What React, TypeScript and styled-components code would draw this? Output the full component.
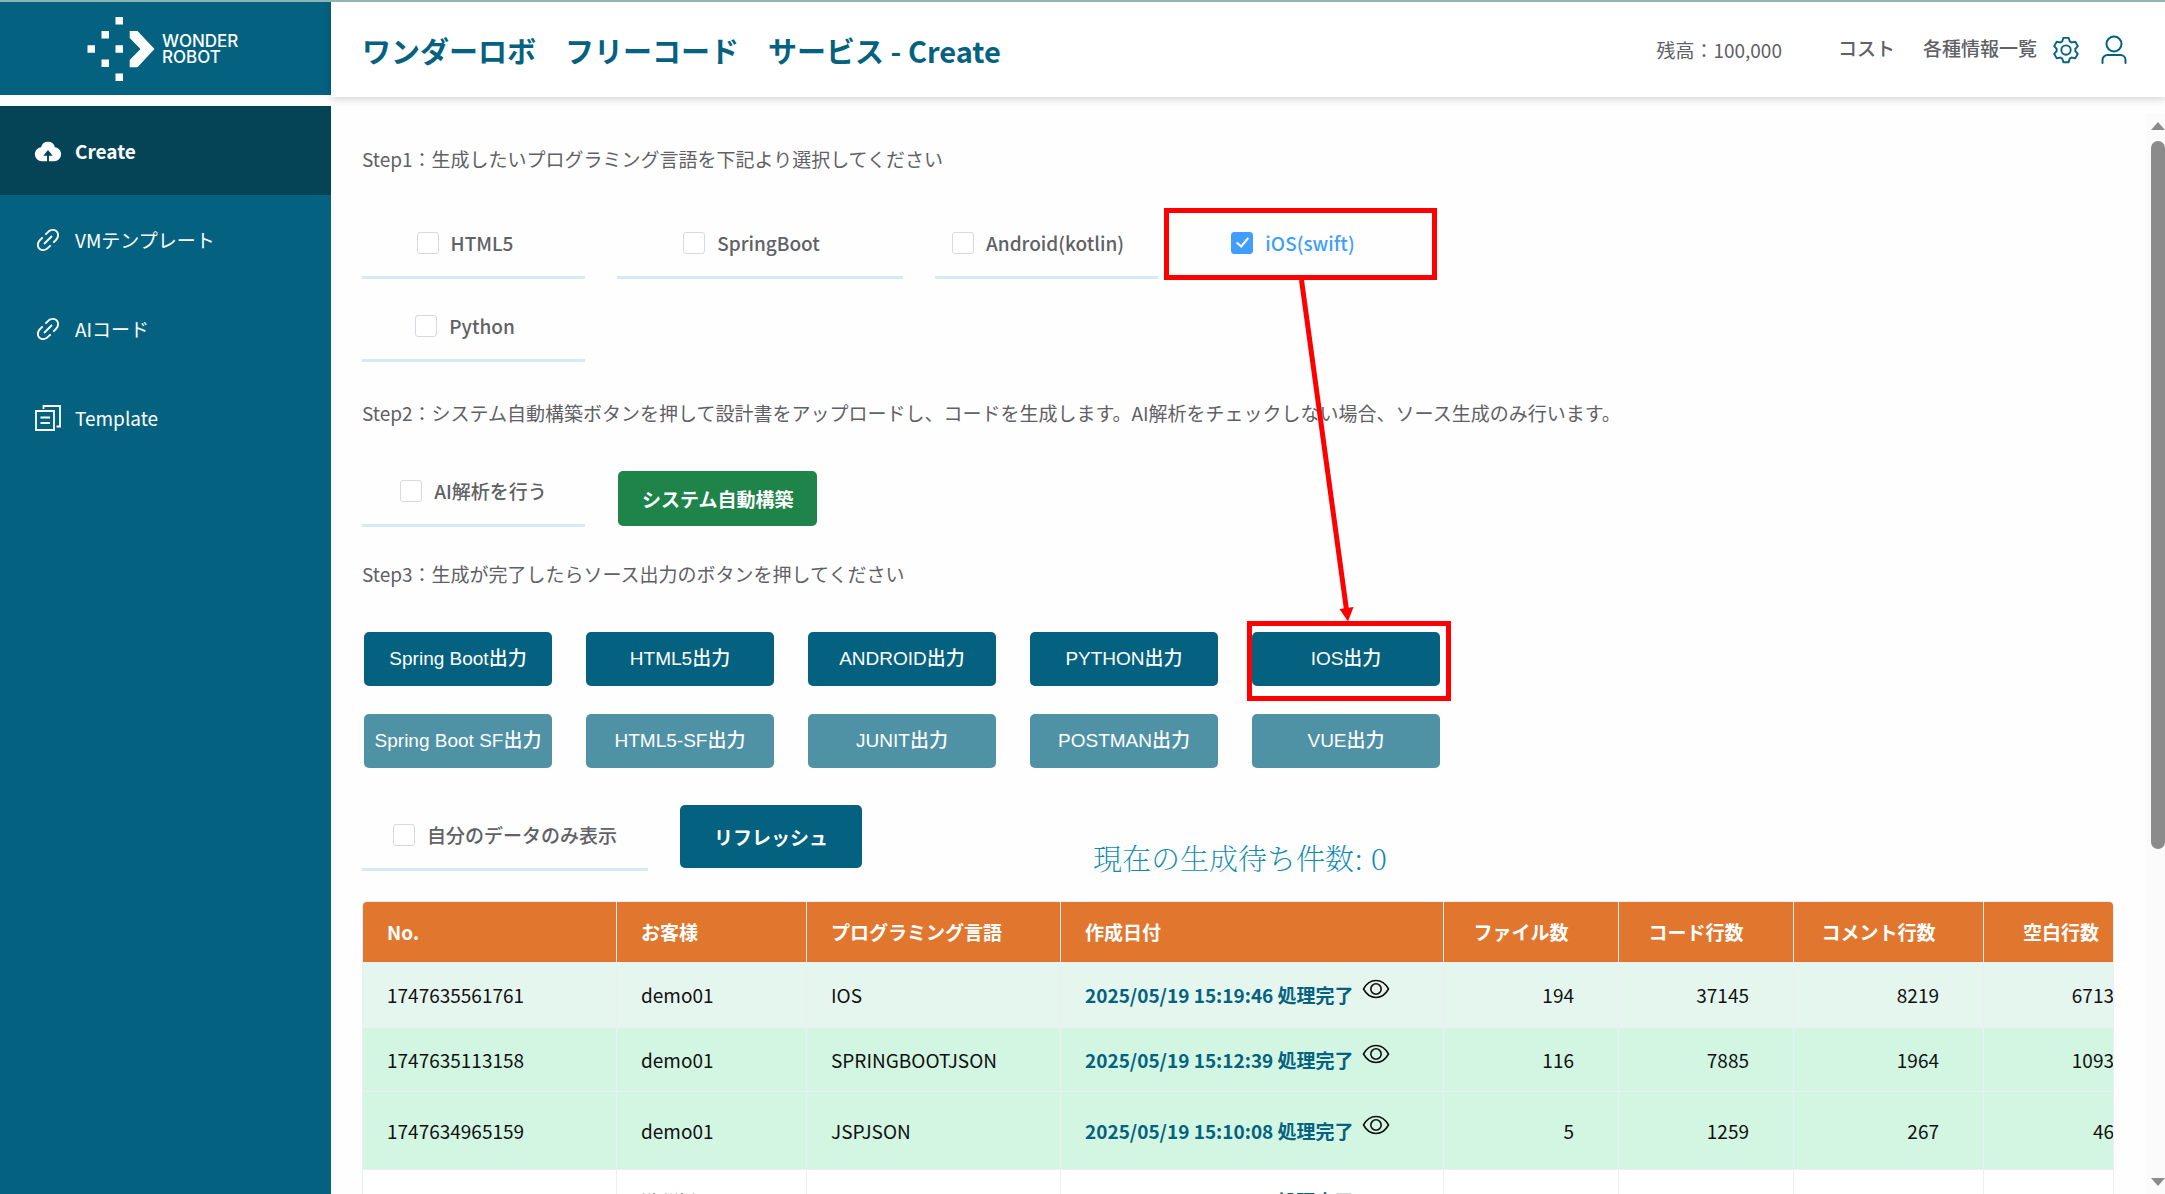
import React from "react";
import styled, { createGlobalStyle, css } from "styled-components";

const Global = createGlobalStyle`
  *, *::before, *::after { box-sizing: border-box; }
  body { margin: 0; background: #fefefe; color: #5f6165; font: 400 19px/28px "Noto Sans CJK JP", sans-serif; overflow: hidden; }
  button, input { font: inherit; }
`;

const Shell = styled.div`
  display: grid;
  grid-template-columns: 331px minmax(0, 1fr);
  grid-template-rows: 97px minmax(0, 1fr);
  height: 100vh;
  border-top: 2px solid #8fb4b6;
  overflow: hidden;
`;

const Brand = styled.div`
  display: flex;
  align-items: center;
  gap: 6px;
  height: 93px;
  padding-left: 86px;
  background: #046280;
`;

const BrandName = styled.div`
  color: #fff;
  font: 500 17px/16px Inter, "Liberation Sans", sans-serif;
`;

const Header = styled.header`
  z-index: 1;
  display: flex;
  align-items: center;
  height: 95px;
  padding: 0 36px 0 31px;
  background: #fff;
  box-shadow: 0 2px 8px rgba(0, 0, 0, 0.18);
`;

const Title = styled.h1`
  flex: 1;
  margin: 0;
  color: #046280;
  font-size: 29px;
  line-height: 40px;
  font-weight: 700;
  white-space: pre;
`;

const HeaderLinks = styled.nav`
  display: flex;
  align-items: center;
`;

const Balance = styled.span`
  margin-right: 56px;
`;

const HeaderLink = styled.a`
  margin-right: 28px;
  padding-bottom: 4px;
  color: inherit;
  font-weight: 500;
  text-decoration: none;
  & + & { margin-right: 14px; }
`;

const IconButton = styled.button`
  display: flex;
  padding: 0;
  border: 0;
  background: none;
  color: #046280;
  cursor: pointer;
  & + & { margin-left: 18px; }
`;

const Sidebar = styled.nav`
  margin-top: 7px;
  background: #046280;
`;

const SideItem = styled.a<{ $active?: boolean }>`
  display: flex;
  align-items: center;
  gap: 12px;
  height: 89px;
  padding-left: 33px;
  color: #fff;
  background: ${(p) => (p.$active ? "#044456" : "transparent")};
  font-weight: ${(p) => (p.$active ? 700 : 400)};
  text-decoration: none;
`;

const Content = styled.div`
  display: flex;
  min-width: 0;
  padding-top: 14px;
`;

const Main = styled.main`
  flex: 1;
  min-width: 0;
  padding: 32px 32px 0 31px;
`;

const Step = styled.p`
  margin: 0;
`;

const Options = styled.div`
  display: flex;
  flex-wrap: wrap;
  gap: 26px 32px;
  max-width: 1200px;
  margin: 49px 0 37px;
`;

const ActionRow = styled.div`
  display: flex;
  align-items: center;
  gap: 32px;
  margin: 43px 0 33px;
`;

const OptionCell = styled.div<{ $wide?: boolean; $trail?: boolean }>`
  position: relative;
  display: flex;
  justify-content: center;
  width: ${(p) => (p.$wide ? 286 : 223)}px;
  height: 57px;
  padding: 7px ${(p) => (p.$trail ? 17 : 0)}px 0 0;
  border-bottom: 3px solid #d6e9f8;
`;

const CheckLabel = styled.label`
  display: flex;
  align-items: center;
  gap: 12px;
  height: 28px;
  font-weight: 500;
  white-space: nowrap;
  cursor: pointer;
  &:has(:checked) { color: #409eff; }
`;

const CheckBox = styled.input`
  appearance: none;
  width: 22px;
  height: 22px;
  margin: 0;
  border: 1px solid #d6d9e1;
  border-radius: 3px;
  background: #fff;
  &:checked {
    border-color: #409eff;
    background: #409eff;
  }
  &:checked::after {
    content: "";
    display: block;
    width: 7px;
    height: 12px;
    margin: 2px 0 0 7px;
    border: solid #fff;
    border-width: 0 2px 2px 0;
    transform: rotate(40deg);
  }
`;

const HighlightFrame = styled.span<{ $inset: string }>`
  position: absolute;
  inset: ${(p) => p.$inset};
  border: 5px solid #fe0000;
  pointer-events: none;
`;

const Arrow = styled.svg`
  position: absolute;
  z-index: 1;
  top: 58px;
  left: 104px;
  pointer-events: none;
`;

const buttonBase = css`
  border: 0;
  border-radius: 5px;
  color: #fff;
  white-space: nowrap;
  cursor: pointer;
`;

const BuildButton = styled.button`
  ${buttonBase}
  height: 55px;
  margin-left: 1px;
  padding: 0 24px;
  background: #1f844a;
  font-weight: 700;
`;

const RefreshButton = styled.button`
  ${buttonBase}
  height: 63px;
  margin-bottom: 3px;
  padding: 0 34px;
  background: #046280;
  font-weight: 700;
`;

const OutputGrid = styled.div`
  display: grid;
  grid-template-columns: repeat(5, 188px);
  gap: 28px 34px;
  margin: 44px 0 37px;
  padding-left: 2px;
`;

const OutputCell = styled.div`
  position: relative;
  display: grid;
`;

const OutputButton = styled.button<{ $muted?: boolean }>`
  ${buttonBase}
  height: 54px;
  padding: 0;
  background: ${(p) => (p.$muted ? "#4f92a6" : "#046280")};
  font-family: "Liberation Sans", "Noto Sans CJK JP", sans-serif;
  font-weight: 500;
`;

const FilterRow = styled.div`
  display: flex;
  align-items: flex-end;
  gap: 32px;
  margin-bottom: 30px;
`;

const Waiting = styled.p`
  margin: 0 0 -7px 199px;
  color: #0e8bb2;
  font: 200 29px/40px "Noto Serif CJK JP", "Noto Sans CJK JP", serif;
`;

const TableFrame = styled.div`
  overflow: hidden;
  border: 1px solid #ebeef5;
  border-radius: 5px 5px 0 0;
`;

const Table = styled.table`
  width: 1796px;
  border-collapse: separate;
  border-spacing: 0;
  table-layout: fixed;
  color: #111;
`;

const cellBase = css`
  padding: 0 24px;
  border: solid #ebeef5;
  border-width: 0 1px 1px 0;
  white-space: nowrap;
`;

const Th = styled.th<{ $num?: boolean }>`
  ${cellBase}
  height: 61px;
  padding-right: ${(p) => (p.$num ? 44 : 24)}px;
  background: #e1772e;
  color: #fff;
  font-weight: 700;
  text-align: ${(p) => (p.$num ? "center" : "left")};
`;

const Td = styled.td<{ $num?: boolean }>`
  ${cellBase}
  padding-right: ${(p) => (p.$num ? 44 : 24)}px;
  text-align: ${(p) => (p.$num ? "right" : "left")};
`;

const Tr = styled.tr<{ $tone: Tone; $h: number }>`
  height: ${(p) => p.$h}px;
  background: ${(p) => tones[p.$tone]};
`;

const DateCell = styled.span`
  display: flex;
  align-items: center;
  gap: 8px;
`;

const DateLink = styled.a`
  color: #046280;
  font-weight: 700;
  text-decoration: none;
`;

const EyeButton = styled(IconButton)`
  margin-bottom: 12px;
  color: #111;
`;

const ScrollTrack = styled.div`
  display: flex;
  flex-direction: column;
  align-items: center;
  width: 19px;
  padding: 9px 0 8px 5px;
  background: #fbfbfb;
`;

const ScrollArrow = styled.span<{ $down?: boolean }>`
  border: solid transparent;
  border-width: ${(p) => (p.$down ? "8px 7px 0" : "0 7px 8px")};
  border-${(p) => (p.$down ? "top" : "bottom")}-color: #8b8b8b;
  ${(p) => p.$down && "margin-top: auto;"}
`;

const ScrollThumb = styled.span`
  width: 14px;
  height: 66.5%;
  margin-top: 11px;
  border-radius: 7px;
  background: #8b8b8b;
`;

type Tone = "hover" | "done" | "plain";
const tones: Record<Tone, string> = { hover: "#e5f6ee", done: "#d3f6e3", plain: "#fff" };

const languages = [
  { label: "HTML5" },
  { label: "SpringBoot", wide: true },
  { label: "Android(kotlin)" },
  { label: "iOS(swift)", checked: true },
  { label: "Python" },
];

const outputs = [
  "Spring Boot出力", "HTML5出力", "ANDROID出力", "PYTHON出力", "IOS出力",
  "Spring Boot SF出力", "HTML5-SF出力", "JUNIT出力", "POSTMAN出力", "VUE出力",
];

const columns = [
  { title: "No.", width: 254 },
  { title: "お客様", width: 190 },
  { title: "プログラミング言語", width: 254 },
  { title: "作成日付", width: 383 },
  { title: "ファイル数", width: 175, num: true },
  { title: "コード行数", width: 175, num: true },
  { title: "コメント行数", width: 190, num: true },
  { title: "空白行数", width: 175, num: true },
];

const rows: { tone: Tone; h: number; viewable: boolean; cells: string[] }[] = [
  { tone: "hover", h: 65, viewable: true, cells: ["1747635561761", "demo01", "IOS", "2025/05/19 15:19:46 処理完了", "194", "37145", "8219", "6713"] },
  { tone: "done", h: 64, viewable: true, cells: ["1747635113158", "demo01", "SPRINGBOOTJSON", "2025/05/19 15:12:39 処理完了", "116", "7885", "1964", "1093"] },
  { tone: "done", h: 78, viewable: true, cells: ["1747634965159", "demo01", "JSPJSON", "2025/05/19 15:10:08 処理完了", "5", "1259", "267", "46"] },
  { tone: "plain", h: 63, viewable: false, cells: ["1747628380025", "lihlilhl", "JSPJSON", "2025/05/19 13:20:25 処理完了", "4", "11234", "1382", "104"] },
];

const Logo = () => (
  <svg width="70" height="64" viewBox="0 0 70 64" fill="#fff" aria-hidden="true">
    <path d="M29.500 0h7.500v7.500h-7.500zM15.500 14h7.500v7.500h-7.500zM1.500 28.300h7.500v7.500h-7.500zM29.500 28.300h7.500v7.500h-7.500zM15.500 42.500h7.500v7.500h-7.500zM29.500 56.500h7.500v7.500h-7.500zM43.700 14H51.500L68.500 32 51.500 50.200H43.700V43L54.500 32 43.700 21z" />
  </svg>
);

const CloudIcon = () => (
  <svg width="30" height="30" viewBox="0 0 1024 1024" fill="#fff" aria-hidden="true">
    <path d="M544 864V672h128L512 480 352 672h128v192H320v-1.600c-5.376.320-10.496 1.600-16 1.600A240 240 0 0 1 64 624c0-123.136 93.120-223.488 212.608-237.248A239.808 239.808 0 0 1 512 192a239.872 239.872 0 0 1 235.456 194.752c119.488 13.760 212.480 114.112 212.480 237.248a240 240 0 0 1-240 240c-5.376 0-10.560-1.280-16-1.600v1.600z" />
  </svg>
);

const LinkIcon = () => (
  <svg width="30" height="30" viewBox="0 0 1024 1024" fill="#fff" aria-hidden="true">
    <path d="M715.648 625.152 670.400 579.904l90.496-90.560c75.008-74.944 85.120-186.368 22.656-248.896-62.528-62.464-173.952-52.352-248.960 22.656L444.160 353.600l-45.248-45.248 90.496-90.496c100.032-99.968 251.968-110.080 339.456-22.656 87.488 87.488 77.312 239.424-22.656 339.456l-90.496 90.496zm-90.496 90.496-90.496 90.496C434.624 906.112 282.688 916.224 195.200 828.800c-87.488-87.488-77.312-239.424 22.656-339.456l90.496-90.496 45.248 45.248-90.496 90.560c-75.008 74.944-85.120 186.368-22.656 248.896 62.528 62.464 173.952 52.352 248.960-22.656l90.496-90.496zm0-362.048 45.248 45.248L398.848 670.400 353.600 625.152z" />
  </svg>
);

const DocsIcon = () => (
  <svg width="30" height="30" viewBox="0 0 30 30" fill="none" stroke="#fff" strokeWidth="1.800" aria-hidden="true">
    <path d="M3 8h18v19H3zM10.500 6V3H27v20.500h-3.500M7.500 14.500h9.500M7.500 20h9.500" />
  </svg>
);

const GearIcon = () => (
  <svg width="30" height="30" viewBox="0 0 1024 1024" fill="currentColor" aria-hidden="true">
    <path d="M600.704 64a32 32 0 0 1 30.464 22.208l35.200 109.376c14.784 7.232 28.928 15.360 42.432 24.512l112.384-24.192a32 32 0 0 1 34.432 15.360L944.320 364.800a32 32 0 0 1-4.032 37.504l-77.120 85.120a357.120 357.120 0 0 1 0 49.024l77.120 85.248a32 32 0 0 1 4.032 37.504l-88.704 153.600a32 32 0 0 1-34.432 15.296L708.800 803.904c-13.440 9.088-27.648 17.280-42.368 24.512l-35.264 109.376A32 32 0 0 1 600.704 960H423.296a32 32 0 0 1-30.464-22.208L357.696 828.480a351.616 351.616 0 0 1-42.560-24.640l-112.320 24.256a32 32 0 0 1-34.432-15.360L79.680 659.200a32 32 0 0 1 4.032-37.504l77.120-85.248a357.120 357.120 0 0 1 0-48.896l-77.120-85.248A32 32 0 0 1 79.680 364.800l88.704-153.600a32 32 0 0 1 34.432-15.296l112.320 24.256c13.568-9.152 27.776-17.408 42.560-24.640l35.200-109.312A32 32 0 0 1 423.232 64H600.640zm-23.424 64H446.720l-36.352 113.088-24.512 11.968a294.113 294.113 0 0 0-34.816 20.096l-22.656 15.360-116.224-25.088-65.280 113.152 79.680 88.192-1.920 27.136a293.120 293.120 0 0 0 0 40.192l1.920 27.136-79.808 88.192 65.344 113.152 116.224-25.024 22.656 15.296a294.113 294.113 0 0 0 34.816 20.096l24.512 11.968L446.720 896h130.688l36.480-113.152 24.448-11.904a288.282 288.282 0 0 0 34.752-20.096l22.592-15.296 116.288 25.024 65.280-113.152-79.744-88.192 1.920-27.136a293.120 293.120 0 0 0 0-40.256l-1.920-27.136 79.808-88.128-65.344-113.152-116.288 24.960-22.592-15.232a287.616 287.616 0 0 0-34.752-20.096l-24.448-11.904L577.344 128zM512 320a192 192 0 1 1 0 384 192 192 0 0 1 0-384zm0 64a128 128 0 1 0 0 256 128 128 0 0 0 0-256z" />
  </svg>
);

const UserIcon = () => (
  <svg width="30" height="30" viewBox="0 0 30 30" fill="none" stroke="currentColor" strokeWidth="2" strokeLinecap="round" aria-hidden="true">
    <circle cx="15" cy="9" r="7.500" />
    <path d="M3.500 28v-3a5 5 0 0 1 5-5h13a5 5 0 0 1 5 5v3" />
  </svg>
);

const EyeIcon = () => (
  <svg width="28" height="20" viewBox="0 0 28 20" fill="none" stroke="currentColor" strokeWidth="1.600" strokeLinejoin="round" aria-hidden="true">
    <path d="M1.500 10C4.500 4.500 9 1.500 14 1.500S23.500 4.500 26.500 10C23.500 15.500 19 18.500 14 18.500S4.500 15.500 1.500 10z" />
    <circle cx="14" cy="10" r="5.200" />
  </svg>
);

function Check({ id, label, checked }: { id: string; label: string; checked?: boolean }) {
  return (
    <CheckLabel htmlFor={id}>
      <CheckBox id={id} type="checkbox" defaultChecked={checked} />
      {label}
    </CheckLabel>
  );
}

export default function App() {
  return (
    <>
      <Global />
      <Shell>
        <Brand>
          <Logo />
          <BrandName>WONDER<br />ROBOT</BrandName>
        </Brand>
        <Header>
          <Title>ワンダーロボ　フリーコード　サービス - Create</Title>
          <HeaderLinks>
            <Balance>残高：100,000</Balance>
            <HeaderLink href="#cost">コスト</HeaderLink>
            <HeaderLink href="#info">各種情報一覧</HeaderLink>
            <IconButton aria-label="設定"><GearIcon /></IconButton>
            <IconButton aria-label="ユーザー"><UserIcon /></IconButton>
          </HeaderLinks>
        </Header>
        <Sidebar>
          <SideItem href="#create" $active><CloudIcon />Create</SideItem>
          <SideItem href="#vm"><LinkIcon />VMテンプレート</SideItem>
          <SideItem href="#ai"><LinkIcon />AIコード</SideItem>
          <SideItem href="#template"><DocsIcon />Template</SideItem>
        </Sidebar>
        <Content>
          <Main>
            <Step>Step1：生成したいプログラミング言語を下記より選択してください</Step>
            <Options>
              {languages.map((l) => (
                <OptionCell key={l.label} $wide={l.wide} $trail>
                  <Check id={l.label} label={l.label} checked={l.checked} />
                  {l.checked && (
                    <>
                      <HighlightFrame $inset="-14px -24px -4px -26px" />
                      <Arrow width="64" height="344" viewBox="0 0 64 344" aria-hidden="true">
                        <path d="M7.500 0L52.500 330" stroke="#fe0000" strokeWidth="5" />
                        <path d="M45.500 329l14-2-5.500 14.500z" fill="#fe0000" />
                      </Arrow>
                    </>
                  )}
                </OptionCell>
              ))}
            </Options>
            <Step>Step2：システム自動構築ボタンを押して設計書をアップロードし、コードを生成します。AI解析をチェックしない場合、ソース生成のみ行います。</Step>
            <ActionRow>
              <OptionCell><Check id="ai-analysis" label="AI解析を行う" /></OptionCell>
              <BuildButton>システム自動構築</BuildButton>
            </ActionRow>
            <Step>Step3：生成が完了したらソース出力のボタンを押してください</Step>
            <OutputGrid>
              {outputs.map((o, i) => (
                <OutputCell key={o}>
                  <OutputButton $muted={i > 4}>{o}</OutputButton>
                  {o === "IOS出力" && <HighlightFrame $inset="-11px -11px -15px -5px" />}
                </OutputCell>
              ))}
            </OutputGrid>
            <FilterRow>
              <OptionCell $wide><Check id="own-data" label="自分のデータのみ表示" /></OptionCell>
              <RefreshButton>リフレッシュ</RefreshButton>
              <Waiting>現在の生成待ち件数: 0</Waiting>
            </FilterRow>
            <TableFrame>
              <Table>
                <colgroup>
                  {columns.map((c) => <col key={c.title} style={{ width: c.width }} />)}
                </colgroup>
                <thead>
                  <tr>{columns.map((c) => <Th key={c.title} $num={c.num}>{c.title}</Th>)}</tr>
                </thead>
                <tbody>
                  {rows.map((r) => (
                    <Tr key={r.cells[0]} $tone={r.tone} $h={r.h}>
                      {r.cells.map((c, i) => (
                        <Td key={columns[i].title} $num={columns[i].num}>
                          {i === 3 ? (
                            <DateCell>
                              <DateLink href="#detail">{c}</DateLink>
                              {r.viewable && <EyeButton aria-label="表示"><EyeIcon /></EyeButton>}
                            </DateCell>
                          ) : c}
                        </Td>
                      ))}
                    </Tr>
                  ))}
                </tbody>
              </Table>
            </TableFrame>
          </Main>
          <ScrollTrack>
            <ScrollArrow />
            <ScrollThumb />
            <ScrollArrow $down />
          </ScrollTrack>
        </Content>
      </Shell>
    </>
  );
}
